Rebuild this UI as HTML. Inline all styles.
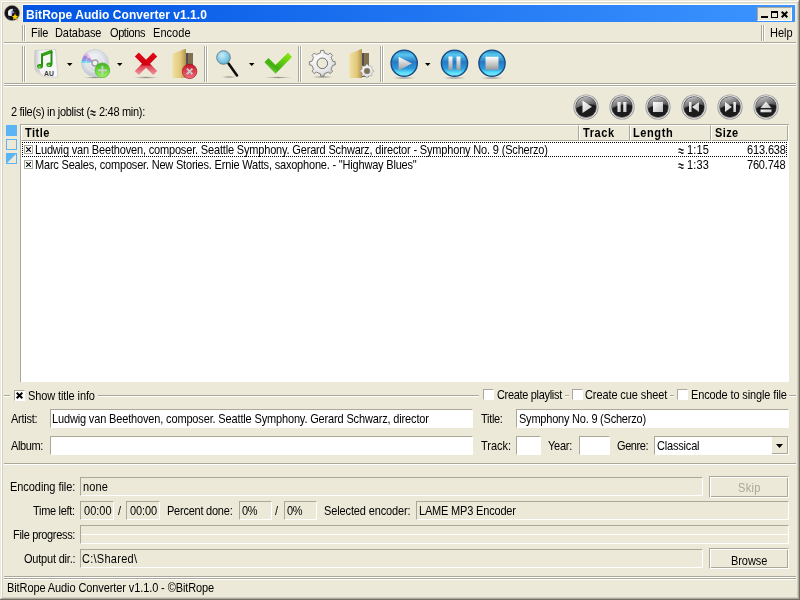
<!DOCTYPE html>
<html><head><meta charset="utf-8">
<style>
*{box-sizing:border-box}
html,body{margin:0;padding:0}
body{width:800px;height:600px;overflow:hidden;background:#ECE9D8;position:relative;font-family:"Liberation Sans",sans-serif;font-size:11px;color:#000}
.a{position:absolute}
.t{position:absolute;white-space:pre;line-height:13px;font-variant-ligatures:none;will-change:transform;transform:scaleY(1.125);transform-origin:0 10px}
.hl{position:absolute;height:1px;background:#ACA899}
.wl{position:absolute;height:1px;background:#fff}
.grip{position:absolute;width:4px;border-left:1px solid #ACA899;border-right:1px solid #fff;}
.grip:before{content:"";position:absolute;left:0;top:0;bottom:0;width:1px;background:#fff}
.grip:after{content:"";position:absolute;left:1px;top:0;bottom:0;width:1px;background:#ACA899}
.ed{position:absolute;background:#fff;border-top:1px solid #ACA899;border-left:1px solid #ACA899;border-bottom:1px solid #fff;border-right:1px solid #fff}
.ro{position:absolute;background:#ECE9D8;border-top:1px solid #ACA899;border-left:1px solid #ACA899;border-bottom:1px solid #fff;border-right:1px solid #fff}
.btn{position:absolute;background:#ECE9D8;border-top:1px solid #ACA899;border-left:1px solid #ACA899;border-bottom:1px solid #fff;border-right:1px solid #fff;box-shadow:inset 1px 1px #fff,inset -1px -1px #ACA899}
.hdr{position:absolute;top:125px;height:16px;background:#ECE9D8;border-top:1px solid #fff;border-left:1px solid #fff;border-right:1px solid #ACA899;border-bottom:1px solid #ACA899}
.cb{position:absolute;width:11px;height:11px;background:#fff;border-top:1px solid #ACA899;border-left:1px solid #ACA899;border-right:1px solid #fff;border-bottom:1px solid #fff}
.lcb{position:absolute;width:9px;height:9px;background:#fff;border:1px solid #ACA899}

</style></head><body>
<!-- window frame -->
<div class="wl" style="left:1px;top:1px;width:797px"></div>
<div class="a" style="left:1px;top:1px;width:1px;height:597px;background:#fff"></div>
<div class="a" style="left:2px;top:2px;width:1px;height:596px;background:#D4D0C8"></div>
<div class="a" style="left:2px;top:2px;width:796px;height:1px;background:#D8D5C9"></div>
<div class="a" style="left:797px;top:2px;width:1px;height:596px;background:#D4D0C8"></div>
<div class="a" style="left:2px;top:597px;width:796px;height:1px;background:#D4D0C8"></div>
<div class="a" style="left:798px;top:1px;width:1px;height:598px;background:#ACA899"></div>
<div class="a" style="left:799px;top:0;width:1px;height:600px;background:#716F64"></div>
<div class="a" style="left:1px;top:598px;width:798px;height:1px;background:#ACA899"></div>
<div class="a" style="left:0;top:599px;width:800px;height:1px;background:#716F64"></div>

<!-- app icon -->
<svg class="a" style="left:2px;top:3px" width="20" height="20" viewBox="0 0 20 20">
<circle cx="10" cy="10" r="7.6" fill="#141414" stroke="#808080" stroke-width="0.6"/>
<path d="M6 8 Q8 5.5 11 5.8 L9.5 13 L6.5 12.5z" fill="#E8E8E8"/>
<path d="M6.2 9.5 L9 7 L9.6 12.6 L6.5 12.4z" fill="#FFFFFF"/>
<path d="M8.8 7.5 L10 8 L9.5 12 L8.6 12z" fill="#B0A0F0"/>
<path d="M9.8 7 L12.5 9 L10.5 11z" fill="#7090C0"/>
<circle cx="7" cy="15" r="0.6" fill="#4080D0"/>
<circle cx="13" cy="6.5" r="0.6" fill="#4080D0"/>
<path d="M13 10.5l1 2.2 2.3.2-1.8 1.5.6 2.3-2.1-1.2-2 1.3.5-2.3-1.7-1.6 2.3-.2z" fill="#FFD800"/>
<path d="M12.5 10.2l1.2-.3" stroke="#E02000" stroke-width="0.9"/>
<path d="M14.5 16.5l1 .8" stroke="#E04000" stroke-width="0.8"/>
</svg>

<!-- title bar -->
<div class="a" style="left:22px;top:4px;width:774px;height:1px;background:#fff"></div>
<div class="a" style="left:22px;top:4px;width:1px;height:18px;background:#fff"></div>
<div class="a" style="left:23px;top:5px;width:772px;height:17px;background:linear-gradient(to right,#0054E3,#3D95FF)"></div>
<div class="a" style="left:757px;top:7px;width:35px;height:14px;background:#ECE9D8;border-top:1px solid #ACA899;border-left:1px solid #ACA899;border-bottom:1px solid #fff;border-right:1px solid #fff"></div>
<div class="a" style="left:761px;top:16px;width:7px;height:2px;background:#000"></div>
<div class="a" style="left:771px;top:11px;width:7px;height:7px;border:1px solid #000;border-top-width:2px"></div>
<svg class="a" style="left:781px;top:11px" width="7" height="7" viewBox="0 0 7 7"><path d="M0.7 0.7L6.3 6.3M6.3 0.7L0.7 6.3" stroke="#000" stroke-width="2"/></svg>

<!-- menu bar -->
<div class="grip" style="left:22px;top:25px;height:16px"></div>
<div class="grip" style="left:761px;top:25px;height:16px"></div>
<div class="hl" style="left:4px;top:42px;width:792px"></div>
<div class="wl" style="left:4px;top:43px;width:792px"></div>

<!-- toolbar frame -->
<div class="grip" style="left:22px;top:46px;height:36px"></div>
<div class="hl" style="left:4px;top:83px;width:792px"></div>
<div class="wl" style="left:4px;top:84px;width:792px"></div>
<div class="hl" style="left:4px;top:85px;width:792px"></div>
<div class="wl" style="left:4px;top:86px;width:792px"></div>

<!-- left mini icons -->
<div class="a" style="left:6px;top:125px;width:11px;height:11px;background:#5AB4F5"></div>
<div class="a" style="left:6px;top:139px;width:11px;height:11px;border:1px solid #5AB4F5"></div>
<svg class="a" style="left:6px;top:153px" width="11" height="11" viewBox="0 0 11 11"><rect x="0.5" y="0.5" width="10" height="10" fill="#ECE9D8" stroke="#5AB4F5"/><path d="M0 0H11L0 11z" fill="#5AB4F5"/></svg>

<!-- list view -->
<div class="a" style="left:20px;top:124px;width:769px;height:258px;background:#fff;border-top:1px solid #ACA899;border-left:1px solid #ACA899"></div>
<div class="hdr" style="left:21px;width:558px"></div>
<div class="hdr" style="left:579px;width:51px"></div>
<div class="hdr" style="left:630px;width:81px"></div>
<div class="hdr" style="left:711px;width:77px"></div>
<div class="a" style="left:22px;top:142px;width:765px;height:15px;border:1px dotted #000"></div>
<div class="lcb" style="left:24px;top:145px"></div>
<svg class="a" style="left:26px;top:147px" width="5" height="5" viewBox="0 0 5 5"><path d="M0 0L5 5M5 0L0 5" stroke="#000" stroke-width="1.1"/></svg>
<div class="lcb" style="left:24px;top:160px"></div>
<svg class="a" style="left:26px;top:162px" width="5" height="5" viewBox="0 0 5 5"><path d="M0 0L5 5M5 0L0 5" stroke="#000" stroke-width="1.1"/></svg>

<!-- title info group -->
<div class="hl" style="left:4px;top:395px;width:6px"></div>
<div class="wl" style="left:4px;top:396px;width:6px"></div>
<div class="cb" style="left:14px;top:390px"></div>
<svg class="a" style="left:16px;top:392px" width="7" height="7" viewBox="0 0 7 7"><path d="M0.7 0.7L6.3 6.3M6.3 0.7L0.7 6.3" stroke="#000" stroke-width="2"/></svg>
<div class="hl" style="left:98px;top:395px;width:381px"></div>
<div class="wl" style="left:98px;top:396px;width:381px"></div>
<div class="cb" style="left:483px;top:389px"></div>
<div class="hl" style="left:565px;top:395px;width:4px"></div>
<div class="wl" style="left:565px;top:396px;width:4px"></div>
<div class="cb" style="left:572px;top:389px"></div>
<div class="hl" style="left:670px;top:395px;width:4px"></div>
<div class="wl" style="left:670px;top:396px;width:4px"></div>
<div class="cb" style="left:677px;top:389px"></div>
<div class="hl" style="left:789px;top:395px;width:7px"></div>
<div class="wl" style="left:789px;top:396px;width:7px"></div>

<div class="ed" style="left:50px;top:409px;width:423px;height:19px"></div>
<div class="ed" style="left:516px;top:409px;width:273px;height:19px"></div>
<div class="ed" style="left:50px;top:436px;width:423px;height:19px"></div>
<div class="ed" style="left:516px;top:436px;width:25px;height:19px"></div>
<div class="ed" style="left:579px;top:436px;width:31px;height:19px"></div>
<div class="ed" style="left:654px;top:436px;width:135px;height:19px"></div>
<div class="a" style="left:772px;top:437px;width:16px;height:17px;background:#ECE9D8;border-right:1px solid #ACA899;border-bottom:1px solid #ACA899"></div>
<svg class="a" style="left:776px;top:444px" width="7" height="4" viewBox="0 0 7 4"><path d="M0 0H7L3.5 4z" fill="#000"/></svg>

<div class="hl" style="left:4px;top:463px;width:792px"></div>
<div class="wl" style="left:4px;top:464px;width:792px"></div>

<!-- encoding section -->
<div class="ro" style="left:80px;top:477px;width:623px;height:19px"></div>
<div class="btn" style="left:709px;top:476px;width:80px;height:22px"></div>
<div class="ro" style="left:80px;top:501px;width:34px;height:19px"></div>
<div class="ro" style="left:126px;top:501px;width:34px;height:19px"></div>
<div class="ro" style="left:239px;top:501px;width:33px;height:19px"></div>
<div class="ro" style="left:284px;top:501px;width:33px;height:19px"></div>
<div class="ro" style="left:416px;top:501px;width:373px;height:19px"></div>
<div class="ro" style="left:80px;top:525px;width:709px;height:19px"></div>
<div class="wl" style="left:81px;top:534px;width:707px"></div>
<div class="ro" style="left:80px;top:549px;width:623px;height:19px"></div>
<div class="btn" style="left:709px;top:548px;width:80px;height:21px"></div>

<!-- status bar -->
<div class="hl" style="left:4px;top:576px;width:792px"></div>
<div class="wl" style="left:4px;top:577px;width:792px"></div>
<div class="hl" style="left:4px;top:578px;width:792px"></div>
<div class="wl" style="left:4px;top:579px;width:792px"></div>

<!-- toolbar icons -->
<svg class="a" style="left:0;top:44px" width="520" height="40" viewBox="0 44 520 40">
<defs>
<linearGradient id="gX" x1="0" y1="0" x2="0" y2="1"><stop offset="0" stop-color="#E00818"/><stop offset="0.55" stop-color="#D00010"/><stop offset="0.62" stop-color="#E04858"/><stop offset="1" stop-color="#F098A0"/></linearGradient>
<linearGradient id="gChk" x1="0" y1="1" x2="1" y2="0"><stop offset="0" stop-color="#9AF060"/><stop offset="0.35" stop-color="#40B010"/><stop offset="1" stop-color="#90F010"/></linearGradient>
<linearGradient id="gPage" x1="0" y1="0" x2="1" y2="1"><stop offset="0" stop-color="#FFFFFF"/><stop offset="0.5" stop-color="#E8E8E8"/><stop offset="1" stop-color="#F6F6F6"/></linearGradient>
<radialGradient id="gDisc" cx="0.45" cy="0.35" r="0.7"><stop offset="0" stop-color="#F4F4F6"/><stop offset="0.6" stop-color="#D8DCE2"/><stop offset="1" stop-color="#B8C4D0"/></radialGradient>
<linearGradient id="gGreen" x1="0" y1="0" x2="0" y2="1"><stop offset="0" stop-color="#40B020"/><stop offset="0.5" stop-color="#68D838"/><stop offset="1" stop-color="#A0F070"/></linearGradient>
<linearGradient id="gFold" x1="0" y1="0" x2="1" y2="0"><stop offset="0" stop-color="#F0E0A0"/><stop offset="0.6" stop-color="#E0C878"/><stop offset="1" stop-color="#B09050"/></linearGradient>
<linearGradient id="gRed" x1="0" y1="0" x2="0" y2="1"><stop offset="0" stop-color="#C01828"/><stop offset="0.5" stop-color="#E04050"/><stop offset="1" stop-color="#F07080"/></linearGradient>
<radialGradient id="gLens" cx="0.4" cy="0.35" r="0.7"><stop offset="0" stop-color="#C8ECF8"/><stop offset="0.7" stop-color="#78C4E0"/><stop offset="1" stop-color="#5AA8C8"/></radialGradient>
<radialGradient id="gGear" cx="0.4" cy="0.35" r="0.75"><stop offset="0" stop-color="#FFFFFF"/><stop offset="0.7" stop-color="#E4E4E4"/><stop offset="1" stop-color="#B8B8B8"/></radialGradient>
<linearGradient id="gBlue" x1="0" y1="0" x2="0" y2="1"><stop offset="0" stop-color="#2A88C8"/><stop offset="0.18" stop-color="#58C8F0"/><stop offset="0.45" stop-color="#2878C0"/><stop offset="0.7" stop-color="#2A98DC"/><stop offset="0.86" stop-color="#58E0F8"/><stop offset="1" stop-color="#90E8F8"/></linearGradient>
<linearGradient id="gSilver" x1="0" y1="0" x2="0" y2="1"><stop offset="0" stop-color="#FFFFFF"/><stop offset="1" stop-color="#9A9A9A"/></linearGradient>
<radialGradient id="gShadow" cx="0.5" cy="0.5" r="0.5"><stop offset="0" stop-color="#707070" stop-opacity="0.8"/><stop offset="1" stop-color="#909090" stop-opacity="0"/></radialGradient>
</defs>
<!-- AU page -->
<defs><linearGradient id="gPg2" x1="0" y1="0" x2="1" y2="0"><stop offset="0" stop-color="#C8C8C8"/><stop offset="0.25" stop-color="#F4F4F4"/><stop offset="1" stop-color="#FAFAFA"/></linearGradient>
<linearGradient id="gNote" x1="0" y1="0" x2="1" y2="1"><stop offset="0" stop-color="#208800"/><stop offset="0.5" stop-color="#38A818"/><stop offset="1" stop-color="#188000"/></linearGradient></defs>
<path d="M35 50.5 L55.5 49.5 Q57 63 57.8 77.2 L44 76.8 Q37.5 74.5 35 69.5 Q34.3 60 35 50.5z" fill="url(#gPg2)" stroke="#B8B8B8" stroke-width="0.5"/>
<path d="M35.2 69.5 Q38 72 44 76.8 Q40 73 38.5 68z" fill="#D0D0D0"/>
<path d="M41.2 55.2 L52.2 51.2" stroke="url(#gNote)" stroke-width="3.2" fill="none"/>
<path d="M42 54.5 L42 66.2" stroke="#259010" stroke-width="2" fill="none"/>
<path d="M51.5 51 L51.5 64.5" stroke="#259010" stroke-width="2" fill="none"/>
<ellipse cx="40" cy="66.3" rx="2.9" ry="2.3" fill="#2E9A12"/>
<ellipse cx="49.3" cy="64.8" rx="2.9" ry="2.3" fill="#2E9A12"/>
<ellipse cx="39.5" cy="66.8" rx="1.2" ry="0.9" fill="#90D870"/>
<ellipse cx="48.8" cy="65.3" rx="1.2" ry="0.9" fill="#90D870"/>
<text x="44" y="75.6" font-family="Liberation Sans" font-weight="bold" font-size="6.8" fill="#383838">AU</text>
<path d="M67 63h5.5l-2.75 3z" fill="#000"/>
<!-- disc -->
<ellipse cx="95" cy="77.5" rx="12" ry="1.2" fill="url(#gShadow)"/>
<circle cx="95" cy="63" r="13.6" fill="url(#gDisc)" stroke="#C0C8D0" stroke-width="0.6"/>
<path d="M84.5 55 Q85.5 53.5 86.5 52.6 L94 62z" fill="#E8A8E8" opacity="0.9"/>
<path d="M82.6 58.5 Q83.3 56.5 84.5 55 L94 62z" fill="#9878D8" opacity="0.9"/>
<path d="M81.8 61 Q82 59.7 82.6 58.5 L94 62.3z" fill="#6090E0" opacity="0.85"/>
<path d="M81.5 63 Q81.5 62 81.8 61 L94 62.5z" fill="#58D8F0" opacity="0.9"/>
<circle cx="95" cy="63" r="9" fill="none" stroke="#FFFFFF" stroke-width="1" opacity="0.4"/>
<circle cx="95" cy="63" r="3" fill="#F0F0F0" stroke="#A0A0A0" stroke-width="1.4"/>
<circle cx="102.4" cy="70.3" r="7.4" fill="url(#gGreen)" stroke="#40A020" stroke-width="0.5"/>
<path d="M102.4 65.8v9M97.9 70.3h9" stroke="#D0D0D0" stroke-width="1.8"/>
<path d="M117 63h5.5l-2.75 3z" fill="#000"/>
<!-- red X -->
<ellipse cx="146" cy="77.5" rx="13" ry="1.3" fill="url(#gShadow)"/>
<path d="M134.8 56.5 L138.8 52.5 L146 59.7 L153.2 52.5 L157.2 56.5 L150 63.7 L157.2 70.9 L153.2 74.9 L146 67.7 L138.8 74.9 L134.8 70.9 L142 63.7z" fill="url(#gX)"/>
<!-- folder with x -->
<path d="M185 53 L193 53 L193 77 L185 77z" fill="#807050"/>
<path d="M185 53 L188 53 L188 77 L185 77z" fill="#505050"/>
<path d="M172.5 54 L183 49.5 L186 49 L186 78 L172.5 78z" fill="url(#gFold)"/>
<circle cx="189.6" cy="71.4" r="7.3" fill="url(#gRed)" stroke="#A01020" stroke-width="0.6"/>
<path d="M186.8 68.6l5.6 5.6M192.4 68.6l-5.6 5.6" stroke="#C8C8C8" stroke-width="2"/>
<!-- magnifier -->
<ellipse cx="229" cy="77" rx="8" ry="1.2" fill="url(#gShadow)"/>
<path d="M228.5 63.5 L237 75.5" stroke="#101010" stroke-width="2.6" stroke-linecap="round"/>
<circle cx="223.5" cy="57.5" r="6.8" fill="url(#gLens)" stroke="#607888" stroke-width="0.9"/>
<path d="M249 63h5.5l-2.75 3z" fill="#000"/>
<!-- check -->
<ellipse cx="278" cy="77.5" rx="14" ry="1.2" fill="url(#gShadow)"/>
<path d="M264.4 62.2 L268.5 58 L275.5 65 L288 52.8 L292 57 L275.5 73.8z" fill="url(#gChk)"/>
<!-- gear -->
<ellipse cx="322.5" cy="77" rx="11" ry="1.3" fill="url(#gShadow)"/>
<g transform="translate(322.3 63.3)">
<path id="gearp" d="M-2.02 -10.41 L-1.58 -12.90 L1.58 -12.90 L2.02 -10.41 L5.93 -8.79 L8.00 -10.24 L10.24 -8.00 L8.79 -5.93 L10.41 -2.02 L12.90 -1.58 L12.90 1.58 L10.41 2.02 L8.79 5.93 L10.24 8.00 L8.00 10.24 L5.93 8.79 L2.02 10.41 L1.58 12.90 L-1.58 12.90 L-2.02 10.41 L-5.93 8.79 L-8.00 10.24 L-10.24 8.00 L-8.79 5.93 L-10.41 2.02 L-12.90 1.58 L-12.90 -1.58 L-10.41 -2.02 L-8.79 -5.93 L-10.24 -8.00 L-8.00 -10.24 L-5.93 -8.79z" fill="url(#gGear)" stroke="#6A6A6A" stroke-width="0.8"/>
<circle r="5.3" fill="#ECE9D8" stroke="#606060" stroke-width="0.9"/>
</g>
<!-- folder gear -->
<path d="M361 53 L369 53 L369 77 L361 77z" fill="#807050"/>
<path d="M361 53 L364 53 L364 77 L361 77z" fill="#505050"/>
<path d="M349.5 54 L360 49.5 L362 49 L362 78 L349.5 78z" fill="url(#gFold)"/>
<g transform="translate(367 71) scale(0.52)">
<path d="M-2.02 -10.41 L-1.58 -12.90 L1.58 -12.90 L2.02 -10.41 L5.93 -8.79 L8.00 -10.24 L10.24 -8.00 L8.79 -5.93 L10.41 -2.02 L12.90 -1.58 L12.90 1.58 L10.41 2.02 L8.79 5.93 L10.24 8.00 L8.00 10.24 L5.93 8.79 L2.02 10.41 L1.58 12.90 L-1.58 12.90 L-2.02 10.41 L-5.93 8.79 L-8.00 10.24 L-10.24 8.00 L-8.79 5.93 L-10.41 2.02 L-12.90 1.58 L-12.90 -1.58 L-10.41 -2.02 L-8.79 -5.93 L-10.24 -8.00 L-8.00 -10.24 L-5.93 -8.79z" fill="url(#gGear)" stroke="#909090" stroke-width="0.8"/>
<circle r="5.5" fill="#807050" stroke="#808080" stroke-width="1.5"/>
</g>
<!-- play/pause/stop blue -->
<ellipse cx="404" cy="78" rx="12" ry="1.3" fill="url(#gShadow)"/>
<circle cx="404.2" cy="63.2" r="13.1" fill="url(#gBlue)" stroke="#174C84" stroke-width="1.4"/>
<path d="M398.6 56.8 L398.6 70.6 L411.8 63.4z" fill="url(#gSilver)"/>
<path d="M425 63h5.5l-2.75 3z" fill="#000"/>
<ellipse cx="454.5" cy="78" rx="12" ry="1.3" fill="url(#gShadow)"/>
<circle cx="454.5" cy="63.2" r="13.1" fill="url(#gBlue)" stroke="#174C84" stroke-width="1.4"/>
<rect x="448.5" y="56.5" width="4" height="13.5" fill="url(#gSilver)"/>
<rect x="456.5" y="56.5" width="4" height="13.5" fill="url(#gSilver)"/>
<ellipse cx="492" cy="78" rx="12" ry="1.3" fill="url(#gShadow)"/>
<circle cx="492" cy="63.2" r="13.1" fill="url(#gBlue)" stroke="#174C84" stroke-width="1.4"/>
<rect x="485.5" y="56.7" width="13" height="13" fill="url(#gSilver)"/>
</svg>
<!-- toolbar separators -->
<div class="grip" style="left:204px;top:46px;height:36px"></div>
<div class="grip" style="left:298px;top:46px;height:36px"></div>
<div class="grip" style="left:380px;top:46px;height:36px"></div>

<!-- black round buttons -->
<svg class="a" style="left:560px;top:90px" width="230" height="34" viewBox="560 90 230 34">
<defs>
<linearGradient id="gHi" x1="0.2" y1="0" x2="0.7" y2="1"><stop offset="0" stop-color="#C8C8C8"/><stop offset="0.55" stop-color="#7A7A7A"/><stop offset="1" stop-color="#3A3A3A"/></linearGradient>
<linearGradient id="gGly" x1="0" y1="0" x2="1" y2="1"><stop offset="0" stop-color="#FFFFFF"/><stop offset="0.6" stop-color="#D8D8D8"/><stop offset="1" stop-color="#B8B8B8"/></linearGradient>
<g id="rbBase">
<circle cx="0" cy="0" r="12.6" fill="#9A9A9A"/>
<circle cx="0" cy="0" r="11.7" fill="#E8E8E8"/>
<circle cx="0" cy="0" r="10.8" fill="#7A7A7A"/>
<circle cx="0" cy="0" r="10.2" fill="#1C1C1C"/>
<path d="M-10.1 1.5 A10.2 10.2 0 0 1 10.1 -1.5 Q4 -3.5 -2 -2 Q-6.5 -0.8 -10.1 1.5z" fill="url(#gHi)"/>
</g>
</defs>
<use href="#rbBase" x="586" y="107"/>
<use href="#rbBase" x="622" y="107"/>
<use href="#rbBase" x="658" y="107"/>
<use href="#rbBase" x="694" y="107"/>
<use href="#rbBase" x="730" y="107"/>
<use href="#rbBase" x="766" y="107"/>
<path d="M582.5 100.5 L582.5 113 L592 106.8z" fill="url(#gGly)"/>
<rect x="617.5" y="102" width="3.2" height="10" fill="url(#gGly)"/><rect x="623.3" y="102" width="3.2" height="10" fill="url(#gGly)"/>
<rect x="653" y="102" width="10" height="10" fill="url(#gGly)"/>
<rect x="689" y="102" width="2.6" height="10" fill="url(#gGly)"/><path d="M699 102 L699 112 L692 107z" fill="url(#gGly)"/>
<rect x="733.4" y="102" width="2.6" height="10" fill="url(#gGly)"/><path d="M725 102 L725 112 L732 107z" fill="url(#gGly)"/>
<path d="M760.5 108 L771.5 108 L766 101.5z" fill="url(#gGly)"/><rect x="760.5" y="109.5" width="11" height="2.8" fill="url(#gGly)"/>
</svg>

<div class="t" style="left:30.50px;top:27px;font-size:11px;letter-spacing:-0.083px;">File</div>
<div class="t" style="left:54.60px;top:27px;font-size:11px;letter-spacing:-0.086px;">Database</div>
<div class="t" style="left:109.58px;top:27px;font-size:11px;letter-spacing:-0.400px;">Options</div>
<div class="t" style="left:152.75px;top:27px;font-size:11px;letter-spacing:0.050px;">Encode</div>
<div class="t" style="left:770.00px;top:27px;font-size:11px;">Help</div>
<div class="t" style="left:11.40px;top:106px;font-size:11px;letter-spacing:-0.300px;">2 file(s) in joblist (<svg width='6' height='6' viewBox='0 0 6 6' style='display:inline-block;vertical-align:0px;margin-right:3px'><path d='M0.5 2q1.2-1.2 2.5 0t2.5 0M0.5 4.8q1.2-1.2 2.5 0t2.5 0' stroke='#000' stroke-width='1' fill='none'/></svg>2:48 min):</div>
<div class="t" style="left:25.00px;top:127px;font-size:11px;font-weight:bold;letter-spacing:0.475px;">Title</div>
<div class="t" style="left:583.10px;top:127px;font-size:11px;font-weight:bold;letter-spacing:0.600px;">Track</div>
<div class="t" style="left:633.25px;top:127px;font-size:11px;font-weight:bold;letter-spacing:0.600px;">Length</div>
<div class="t" style="left:715.00px;top:127px;font-size:11px;font-weight:bold;letter-spacing:0.400px;">Size</div>
<div class="t" style="left:34.50px;top:144px;font-size:11px;letter-spacing:-0.169px;">Ludwig van Beethoven, composer. Seattle Symphony. Gerard Schwarz, director - Symphony No. 9 (Scherzo)</div>
<div class="t" style="left:678.00px;top:144px;font-size:11px;letter-spacing:0.125px;"><svg width='6' height='6' viewBox='0 0 6 6' style='display:inline-block;vertical-align:0px;margin-right:3px'><path d='M0.5 2q1.2-1.2 2.5 0t2.5 0M0.5 4.8q1.2-1.2 2.5 0t2.5 0' stroke='#000' stroke-width='1' fill='none'/></svg>1:15</div>
<div class="t" style="left:747.00px;top:144px;font-size:11px;letter-spacing:-0.133px;">613.638</div>
<div class="t" style="left:34.50px;top:159px;font-size:11px;letter-spacing:-0.191px;">Marc Seales, composer. New Stories. Ernie Watts, saxophone. - "Highway Blues"</div>
<div class="t" style="left:678.00px;top:159px;font-size:11px;letter-spacing:0.125px;"><svg width='6' height='6' viewBox='0 0 6 6' style='display:inline-block;vertical-align:0px;margin-right:3px'><path d='M0.5 2q1.2-1.2 2.5 0t2.5 0M0.5 4.8q1.2-1.2 2.5 0t2.5 0' stroke='#000' stroke-width='1' fill='none'/></svg>1:33</div>
<div class="t" style="left:747.30px;top:159px;font-size:11px;letter-spacing:-0.183px;">760.748</div>
<div class="t" style="left:27.50px;top:390px;font-size:11px;letter-spacing:-0.107px;">Show title info</div>
<div class="t" style="left:496.50px;top:389px;font-size:11px;letter-spacing:-0.321px;">Create playlist</div>
<div class="t" style="left:585.00px;top:389px;font-size:11px;letter-spacing:-0.100px;">Create cue sheet</div>
<div class="t" style="left:690.50px;top:389px;font-size:11px;letter-spacing:-0.125px;">Encode to single file</div>
<div class="t" style="left:11.00px;top:413px;font-size:11px;letter-spacing:-0.250px;">Artist:</div>
<div class="t" style="left:52.40px;top:413px;font-size:11px;letter-spacing:-0.152px;">Ludwig van Beethoven, composer. Seattle Symphony. Gerard Schwarz, director</div>
<div class="t" style="left:481.00px;top:413px;font-size:11px;letter-spacing:-0.300px;">Title:</div>
<div class="t" style="left:518.50px;top:413px;font-size:11px;letter-spacing:-0.217px;">Symphony No. 9 (Scherzo)</div>
<div class="t" style="left:10.75px;top:440px;font-size:11px;letter-spacing:-0.400px;">Album:</div>
<div class="t" style="left:481.00px;top:440px;font-size:11px;">Track:</div>
<div class="t" style="left:548.00px;top:440px;font-size:11px;letter-spacing:-0.250px;">Year:</div>
<div class="t" style="left:617.35px;top:440px;font-size:11px;letter-spacing:-0.400px;">Genre:</div>
<div class="t" style="left:656.70px;top:440px;font-size:11px;letter-spacing:-0.188px;">Classical</div>
<div class="t" style="left:10.25px;top:481px;font-size:11px;letter-spacing:-0.058px;">Encoding file:</div>
<div class="t" style="left:82.75px;top:481px;font-size:11px;letter-spacing:0.167px;">none</div>
<div class="t" style="left:33.25px;top:505px;font-size:11px;letter-spacing:-0.306px;">Time left:</div>
<div class="t" style="left:83.50px;top:505px;font-size:11px;letter-spacing:0.025px;">00:00</div>
<div class="t" style="left:118.00px;top:505px;font-size:11px;">/</div>
<div class="t" style="left:129.75px;top:505px;font-size:11px;letter-spacing:-0.125px;">00:00</div>
<div class="t" style="left:166.50px;top:505px;font-size:11px;letter-spacing:-0.233px;">Percent done:</div>
<div class="t" style="left:241.57px;top:505px;font-size:11px;letter-spacing:-0.400px;">0%</div>
<div class="t" style="left:275.25px;top:505px;font-size:11px;">/</div>
<div class="t" style="left:286.57px;top:505px;font-size:11px;letter-spacing:-0.400px;">0%</div>
<div class="t" style="left:323.50px;top:505px;font-size:11px;letter-spacing:-0.125px;">Selected encoder:</div>
<div class="t" style="left:419.00px;top:505px;font-size:11px;letter-spacing:-0.183px;">LAME MP3 Encoder</div>
<div class="t" style="left:12.75px;top:529px;font-size:11px;letter-spacing:-0.327px;">File progress:</div>
<div class="t" style="left:23.75px;top:553px;font-size:11px;letter-spacing:-0.205px;">Output dir.:</div>
<div class="t" style="left:82.10px;top:553px;font-size:11px;letter-spacing:0.267px;">C:\Shared\</div>
<div class="t" style="left:738.40px;top:482px;font-size:11px;letter-spacing:0.333px;color:#ACA899;">Skip</div>
<div class="t" style="left:731.40px;top:555px;font-size:11px;letter-spacing:-0.080px;">Browse</div>
<div class="t" style="left:7.40px;top:582px;font-size:11px;letter-spacing:-0.098px;">BitRope Audio Converter v1.1.0 - ©BitRope</div>
<div class="t" style="left:25.75px;top:9px;font-size:12px;font-weight:bold;letter-spacing:0.043px;color:#fff;transform:none;">BitRope Audio Converter v1.1.0</div>
</body></html>
